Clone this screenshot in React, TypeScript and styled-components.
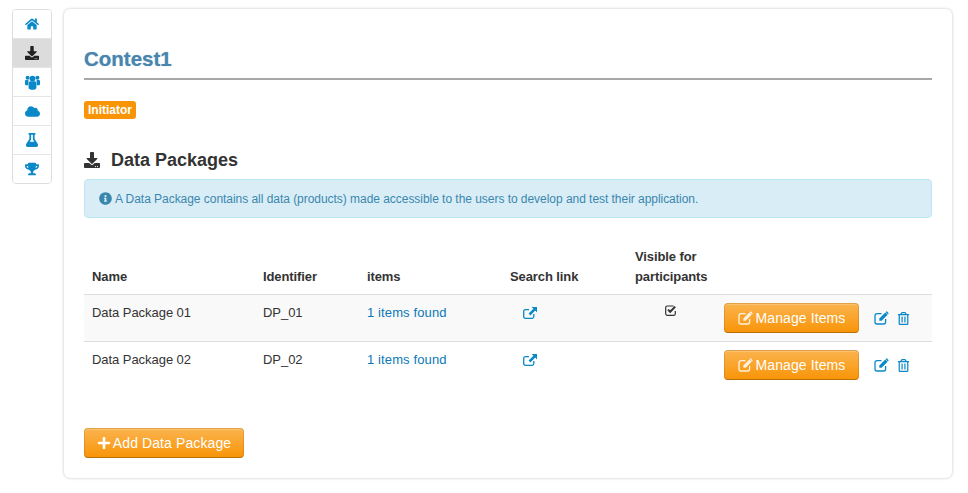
import styled, { createGlobalStyle } from 'styled-components';
import { FaCloud, FaDownload, FaFlask, FaHome, FaInfoCircle, FaPlus, FaRegTrashAlt, FaTrophy } from 'react-icons/fa';

// font awesome 4 icons that differ from the ones in the icon package
const UsersGlyph = () => (
  <svg width="15" height="15" viewBox="0 0 15 15" fill="currentColor">
    <circle cx="2.6" cy="2.7" r="2" />
    <circle cx="12.4" cy="2.7" r="2" />
    <circle cx="7.5" cy="3.6" r="2.9" />
    <path d="M0 6.2C0 5.4.6 5 1.3 5H3.5L3.2 10.2H.9C.4 10.2 0 9.8 0 9.3Z" />
    <path d="M15 6.2C15 5.4 14.4 5 13.7 5H11.5L11.8 10.2H14.1C14.6 10.2 15 9.8 15 9.3Z" />
    <path d="M3.6 8.2C3.6 6.9 4.4 6.2 5.4 6.2H9.6C10.6 6.2 11.4 6.9 11.4 8.2V12.8C11.4 14.2 9.6 14.8 7.5 14.8S3.6 14.2 3.6 12.8Z" />
  </svg>
);

const EditGlyph = ({ size = 14 }: { size?: number }) => (
  <svg width={size} height={size - 1} viewBox="0 0 15 14" fill="none">
    <path
      d="M7.5 2.6H3a2 2 0 0 0-2 2v6.4a2 2 0 0 0 2 2h6.6a2 2 0 0 0 2-2V8"
      stroke="currentColor"
      strokeWidth="1.3"
    />
    <path d="M11.3 1.4 13.6 3.7 7.6 9.7H5.3V7.4Z" fill="currentColor" />
    <path d="M12 .7a.9.9 0 0 1 1.3 0l1 1a.9.9 0 0 1 0 1.3l-.4.4-2.3-2.3Z" fill="currentColor" />
  </svg>
);

const ExternalGlyph = () => (
  <svg width="14" height="12" viewBox="0 0 14 12" fill="none">
    <path
      d="M6 2.6H2.4A1.7 1.7 0 0 0 .7 4.3v5.3a1.7 1.7 0 0 0 1.7 1.7h6.7a1.7 1.7 0 0 0 1.7-1.7V7"
      stroke="currentColor"
      strokeWidth="1.3"
    />
    <path d="M8.6 0H14v5.4L12.2 3.6 7.4 8.4 5.6 6.6 10.4 1.8Z" fill="currentColor" />
  </svg>
);

const CheckGlyph = () => (
  <svg width="12" height="11" viewBox="0 0 12 11" fill="none">
    <path
      d="M8.6 1H2.2A1.5 1.5 0 0 0 .7 2.5v6.3a1.5 1.5 0 0 0 1.5 1.5h6.6a1.5 1.5 0 0 0 1.5-1.5V6"
      stroke="currentColor"
      strokeWidth="1.2"
    />
    <path d="M3 4.6 5.2 6.8 10.2 1.6" stroke="currentColor" strokeWidth="2" />
  </svg>
);

const navItems = [
  { icon: <FaHome size={14} />, active: false },
  { icon: <FaDownload size={14} />, active: true },
  { icon: <UsersGlyph />, active: false },
  { icon: <FaCloud size={15} />, active: false },
  { icon: <FaFlask size={14} />, active: false },
  { icon: <FaTrophy size={14} />, active: false },
];

const packages = [
  { name: 'Data Package 01', id: 'DP_01', visible: true },
  { name: 'Data Package 02', id: 'DP_02', visible: false },
];

const App = () => {
  return (
    <>
      <GlobalStyle />
      <Page>
        <SideNav>
          {navItems.map((x, i) => (
            <NavItem key={i} $active={x.active}>
              {x.icon}
            </NavItem>
          ))}
        </SideNav>
        <Card>
          <Title>Contest1</Title>
          <Role>Initiator</Role>
          <SectionTitle>
            <FaDownload />
            Data Packages
          </SectionTitle>
          <InfoBox>
            <FaInfoCircle />A Data Package contains all data (products) made accessible to the users to develop and
            test their application.
          </InfoBox>
          <PackageTable>
            <colgroup>
              <col style={{ width: 171 }} />
              <col style={{ width: 104 }} />
              <col style={{ width: 143 }} />
              <col style={{ width: 125 }} />
              <col style={{ width: 89 }} />
              <col />
            </colgroup>
            <thead>
              <tr>
                <th>Name</th>
                <th>Identifier</th>
                <th>items</th>
                <th>Search link</th>
                <th>
                  Visible for
                  <br />
                  participants
                </th>
                <th />
              </tr>
            </thead>
            <tbody>
              {packages.map((x) => (
                <PackageRow key={x.id}>
                  <td>{x.name}</td>
                  <td>{x.id}</td>
                  <td>
                    <ItemsLink>1 items found</ItemsLink>
                  </td>
                  <LinkCell>
                    <ExternalGlyph />
                  </LinkCell>
                  <CheckCell>{x.visible && <CheckGlyph />}</CheckCell>
                  <ActionCell>
                    <Actions>
                      <OrangeButton>
                        <EditGlyph size={15} />
                        Manage Items
                      </OrangeButton>
                      <EditGlyph size={15} />
                      <TrashIcon />
                    </Actions>
                  </ActionCell>
                </PackageRow>
              ))}
            </tbody>
          </PackageTable>
          <AddButton>
            <FaPlus />
            Add Data Package
          </AddButton>
        </Card>
      </Page>
    </>
  );
};

export default App;

const GlobalStyle = createGlobalStyle`
  html, body {
    margin: 0;
    padding: 0;
    background: #fff;
  }
  body {
    font-family: "Liberation Sans", Arial, sans-serif;
    font-size: 13px;
    line-height: 18px;
    color: #333;
  }
`;

const Page = styled.div`
  display: flex;
  align-items: flex-start;
  gap: 12px;
  width: 968px;
  height: 493px;
  padding: 9px 16px 0 12px;
  box-sizing: border-box;
  overflow: hidden;
`;

const SideNav = styled.nav`
  flex: none;
  width: 40px;
  background: #fff;
  border: 1px solid #ddd;
  border-radius: 4px;
  box-sizing: border-box;
  overflow: hidden;
`;

const NavItem = styled.div<{ $active: boolean }>`
  display: flex;
  align-items: center;
  justify-content: center;
  height: 29px;
  box-sizing: border-box;
  border-bottom: 1px solid #e5e5e5;
  background: ${(props) => (props.$active ? '#dcdcdc' : '#fff')};
  color: ${(props) => (props.$active ? '#222' : '#0a88c8')};

  &:last-child {
    height: 28px;
    border-bottom: 0;
  }
`;

const Card = styled.main`
  flex: none;
  width: 888px;
  height: 469px;
  padding: 0 20px;
  box-sizing: border-box;
  background: #fff;
  border-radius: 6px;
  box-shadow: 0 0 3px rgba(0, 0, 0, 0.25);
`;

const Title = styled.h1`
  margin: 0;
  padding: 35px 0 0;
  height: 71px;
  box-sizing: border-box;
  border-bottom: 2px solid #a8a8a8;
  color: #4a85ad;
  font-size: 20.5px;
  line-height: 30px;
  font-weight: 700;
  text-shadow: 0 0 1px rgba(74, 133, 173, 0.6);
`;

const Role = styled.span`
  display: inline-block;
  margin-top: 21px;
  padding: 0 4px;
  height: 18px;
  background: #f89406;
  border-radius: 3px;
  color: #fff;
  font-size: 12px;
  line-height: 18px;
  font-weight: 700;
`;

const SectionTitle = styled.h2`
  display: flex;
  align-items: center;
  gap: 11px;
  margin: 30px 0 0;
  height: 22px;
  color: #333;
  font-size: 18px;
  line-height: 22px;
  font-weight: 700;

  svg {
    font-size: 16px;
  }
`;

const InfoBox = styled.div`
  display: flex;
  align-items: center;
  gap: 3px;
  margin-top: 8px;
  height: 39px;
  padding: 0 14px;
  box-sizing: border-box;
  background: #d9edf7;
  border: 1px solid #bce8f1;
  border-radius: 4px;
  color: #3a87ad;
  font-size: 12px;
  letter-spacing: -0.04px;

  svg {
    flex: none;
    font-size: 13px;
  }
`;

const PackageTable = styled.table`
  width: 848px;
  margin-top: 20px;
  border-collapse: collapse;
  table-layout: fixed;

  th {
    padding: 9px 8px 7px;
    border-bottom: 1px solid #ddd;
    text-align: left;
    vertical-align: bottom;
    font-size: 13px;
    line-height: 20px;
    font-weight: 700;
    letter-spacing: -0.1px;
  }

  td {
    padding: 8px;
    vertical-align: top;
    line-height: 20px;
    letter-spacing: -0.05px;
  }
`;

const PackageRow = styled.tr`
  height: 47px;
  border-bottom: 1px solid #ddd;

  &:nth-child(odd) {
    background: #f9f9f9;
  }

  &:last-child {
    border-bottom: 0;
  }
`;

const ItemsLink = styled.a`
  color: #0a78b8;
  letter-spacing: 0.12px;
`;

const LinkCell = styled.td`
  color: #0a88c8;

  && {
    padding: 10px 0 0 21px;
  }
`;

const CheckCell = styled.td`
  && {
    padding: 7px 0 0 38px;
  }
`;

const ActionCell = styled.td`
  && {
    padding: 8px 0 0 8px;
  }
`;

const Actions = styled.div`
  display: flex;
  align-items: center;
  height: 30px;
  color: #0a88c8;
`;

const OrangeButton = styled.button`
  display: inline-flex;
  align-items: center;
  justify-content: center;
  gap: 3px;
  width: 135px;
  height: 30px;
  padding: 0;
  margin-right: 15px;
  border: 1px solid;
  border-color: rgba(0, 0, 0, 0.1) rgba(0, 0, 0, 0.1) rgba(0, 0, 0, 0.25);
  border-radius: 4px;
  background: linear-gradient(#fbb450, #f89406) border-box;
  box-shadow: inset 0 1px 0 rgba(255, 255, 255, 0.2);
  color: #fff;
  font-family: inherit;
  font-size: 14px;
  line-height: 20px;
  letter-spacing: 0.1px;

  svg {
    opacity: 0.85;
  }
`;

const TrashIcon = styled(FaRegTrashAlt)`
  font-size: 13px;
  margin-left: 8px;
`;

const AddButton = styled(OrangeButton)`
  width: 160px;
  margin: 39px 0 0;
  gap: 2px;

  svg {
    opacity: 1;
  }
`;
